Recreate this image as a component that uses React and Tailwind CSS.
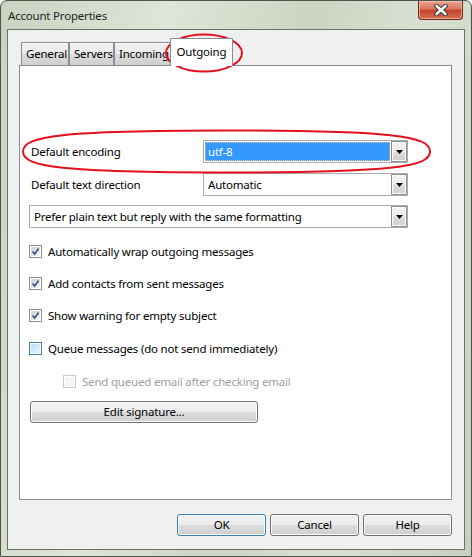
import React from 'react';

const Arrow = () => (
  <div className="flex h-full w-[16px] items-center justify-center border border-[#8e8f8f] bg-[linear-gradient(#f2f2f2,#ebebeb_50%,#dddddd_50%,#cfcfcf)] shadow-[inset_0_0_0_1px_#fbfbfb]">
    <svg width="7" height="4" viewBox="0 0 7 4">
      <path d="M0 0h7L3.5 4z" fill="#000" />
    </svg>
  </div>
);

const Select = ({ value, width, selected }) => (
  <div className={`flex h-[23px] border border-[#abadb3] bg-white ${width}`}>
    <div className="flex flex-1 p-[1px]">
      {selected ? (
        <div className="flex flex-1 items-center border border-dotted border-[#f2c28a] bg-[#3399ff] pl-[2px] text-white">
          {value}
        </div>
      ) : (
        <div className="flex flex-1 items-center pl-[3px]">{value}</div>
      )}
    </div>
    <Arrow />
  </div>
);

const CheckMark = () => (
  <svg width="9" height="9" viewBox="0 0 9 9" className="block">
    <path d="M1.5 4.5L3.6 7L7.6 1.5" fill="none" stroke="#44598a" strokeWidth="1.7" />
  </svg>
);

const Check = ({ checked, hover, disabled }) => (
  <div
    className={`h-[13px] w-[13px] shrink-0 border p-[1px] ${
      disabled ? 'border-[#c9c9c9]' : hover ? 'border-[#3c7fb1]' : 'border-[#8e8f8f]'
    } bg-white`}
  >
    <div
      className={`flex h-full w-full items-center justify-center ${
        disabled
          ? 'bg-[#f4f4f4]'
          : hover
          ? 'bg-[linear-gradient(135deg,#b9dcf4,#e9f5fd)]'
          : 'bg-[linear-gradient(135deg,#cbcfd5,#f6f6f6)]'
      }`}
    >
      {checked && <CheckMark />}
    </div>
  </div>
);

const Btn = ({ children, className, isDefault }) => (
  <div
    className={`flex items-center justify-center rounded-[3px] border ${
      isDefault ? 'border-[#3c7fb1]' : 'border-[#707070]'
    } bg-[linear-gradient(#f2f2f2,#ebebeb_50%,#dddddd_50%,#cfcfcf)] shadow-[inset_0_0_0_1px_#fcfcfc] ${className}`}
  >
    {children}
  </div>
);

const Tab = ({ children, width }) => (
  <div
    className={`flex h-[23px] items-center overflow-hidden whitespace-nowrap border border-b-0 border-[#898c95] bg-[linear-gradient(#f2f2f2,#ebebeb_50%,#dddddd_50%,#cfcfcf)] pl-[4px] shadow-[inset_0_1px_0_0_#fcfcfc] ${width}`}
  >
    {children}
  </div>
);

const CheckRow = ({ children, className, ...rest }) => (
  <div className={`flex h-[13px] items-center gap-[6px] ${className}`}>
    <Check {...rest} />
    <span className={`whitespace-nowrap ${rest.disabled ? 'text-[#a0a0a0]' : ''}`}>{children}</span>
  </div>
);

export default function App() {
  return (
    <div className="relative h-[557px] w-[472px] overflow-hidden bg-white font-['Noto_Sans',sans-serif] text-[11.5px] tracking-[-0.2px] text-black">
      <div className="flex h-full w-full flex-col rounded-t-[7px] border border-[#4d544b] bg-[linear-gradient(100deg,#c9d3c0,#dfe5d8_30%,#cbd5c2_55%,#d9e0d2_75%,#c6d0bc)]">
        {/* title bar */}
        <div className="flex h-[28px] items-start justify-between">
          <span className="pl-[7px] pt-[6px] text-[#1e1e1e]">Account Properties</span>
          <div className="mr-[8px] flex h-[19px] w-[45px] items-center justify-center rounded-b-[4px] border border-t-0 border-[#6d2a1f] bg-[linear-gradient(#e8a493,#d8735c_45%,#c4432a_52%,#d9714f)] shadow-[inset_0_0_0_1px_rgba(255,220,210,0.5)]">
            <svg width="14" height="12" viewBox="0 0 14 12">
              <path d="M2.5 2L11.5 10M11.5 2L2.5 10" stroke="#3b3b3b" strokeWidth="4.6" strokeLinecap="round" />
              <path d="M2.5 2L11.5 10M11.5 2L2.5 10" stroke="#ffffff" strokeWidth="2.6" strokeLinecap="round" />
            </svg>
          </div>
        </div>

        {/* client area */}
        <div className="mx-[6px] flex h-[521px] flex-col border border-[#6a7066] bg-[#f0f0f0]">
          {/* tabs */}
          <div className="flex h-[35px] items-end pl-[13px]">
            <Tab width="w-[48px]">General</Tab>
            <Tab width="w-[45px]">Servers</Tab>
            <Tab width="w-[58px]">Incoming</Tab>
            <div className="relative z-10 -mb-px -ml-[2px] flex h-[28px] w-[63px] items-center justify-center border border-b-0 border-[#898c95] bg-white pb-[1px]">
              Outgoing
            </div>
          </div>

          {/* tab panel */}
          <div className="ml-[11px] flex h-[435px] w-[433px] flex-col border border-[#898c95] bg-white">
            <div className="mt-[74px] flex items-center">
              <span className="w-[183px] pl-[11px]">Default encoding</span>
              <Select value="utf-8" width="w-[205px]" selected />
            </div>
            <div className="mt-[10px] flex items-center">
              <span className="w-[183px] pl-[11px]">Default text direction</span>
              <Select value="Automatic" width="w-[205px]" />
            </div>
            <div className="ml-[9px] mt-[9px]">
              <Select value="Prefer plain text but reply with the same formatting" width="w-[379px]" />
            </div>

            <CheckRow className="ml-[9px] mt-[17px]" checked>
              Automatically wrap outgoing messages
            </CheckRow>
            <CheckRow className="ml-[9px] mt-[19px]" checked>
              Add contacts from sent messages
            </CheckRow>
            <CheckRow className="ml-[9px] mt-[19px]" checked>
              Show warning for empty subject
            </CheckRow>
            <CheckRow className="ml-[9px] mt-[20px]" hover>
              Queue messages (do not send immediately)
            </CheckRow>
            <CheckRow className="ml-[43px] mt-[20px]" disabled>
              Send queued email after checking email
            </CheckRow>

            <Btn className="ml-[10px] mt-[13px] h-[22px] w-[228px]">Edit signature...</Btn>
          </div>

          {/* dialog buttons */}
          <div className="mt-[14px] flex justify-end gap-[4px] pr-[12px]">
            <Btn className="h-[22px] w-[89px]" isDefault>
              OK
            </Btn>
            <Btn className="h-[22px] w-[89px]">Cancel</Btn>
            <Btn className="h-[22px] w-[89px]">Help</Btn>
          </div>
        </div>
      </div>

      {/* red annotation marks */}
      <svg className="pointer-events-none absolute inset-0" width="472" height="557" viewBox="0 0 472 557">
        <ellipse cx="204" cy="53" rx="38" ry="18.5" fill="none" stroke="#e4111e" strokeWidth="2" />
        <path
          d="M23 151.5C23 136 62 130.5 226 130.5C392 130.5 430 136 430 151.5C430 167 392 172.5 226 172.5C62 172.5 23 167 23 151.5Z"
          fill="none"
          stroke="#e4111e"
          strokeWidth="2"
        />
      </svg>
    </div>
  );
}
